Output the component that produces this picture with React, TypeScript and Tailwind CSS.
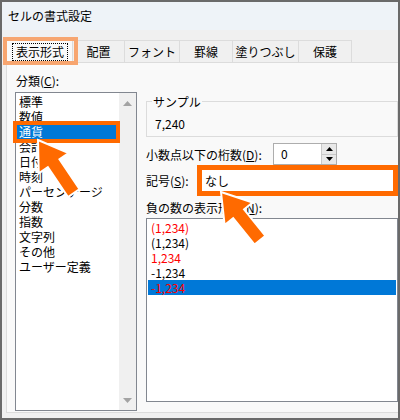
import React from "react";

const font = { fontFamily: "'Noto Sans CJK JP', 'Noto Sans', sans-serif" };

const tabs = [
  { label: "表示形式", w: "w-[68px]" },
  { label: "配置", w: "w-[52px]" },
  { label: "フォント", w: "w-[55px]" },
  { label: "罫線", w: "w-[53px]" },
  { label: "塗りつぶし", w: "w-[66px]" },
  { label: "保護", w: "w-[53px]" },
];

const categories = [
  "標準",
  "数値",
  "通貨",
  "会計",
  "日付",
  "時刻",
  "パーセンテージ",
  "分数",
  "指数",
  "文字列",
  "その他",
  "ユーザー定義",
];

const negatives = [
  { t: "(1,234)", red: true },
  { t: "(1,234)", red: false },
  { t: "1,234", red: true },
  { t: "-1,234", red: false },
  { t: "-1,234", red: true, sel: true },
];

export default function App() {
  return (
    <div
      className="relative w-[400px] h-[420px] overflow-hidden border-2 border-[#6a6a6a] bg-[#f0f0f0] flex flex-col text-[12px] text-black"
      style={font}
    >
      {/* title bar */}
      <div className="h-[28px] bg-[#eef3f8] flex items-center pl-[6px] text-[12px] leading-[16px]">
        セルの書式設定
      </div>

      {/* tabs */}
      <div className="pt-[10px] pl-[3px] flex">
        {tabs.map((t, i) => (
          <div
            key={t.label}
            className={
              "h-[22px] flex items-center justify-center border-t border-r border-[#dcdcdc] " +
              t.w +
              (i === 0 ? " bg-[#f9f9f9] border-l" : " bg-[#f0f0f0]")
            }
          >
            {i === 0 ? (
              <span className="border border-dotted border-black px-[3px] leading-[16px] ml-[2px]">
                {t.label}
              </span>
            ) : (
              <span className="leading-[16px]">{t.label}</span>
            )}
          </div>
        ))}
      </div>

      {/* content pane */}
      <div className="flex-1 ml-[4px] mb-[5px] bg-[#f9f9f9] border-l border-t border-b border-[#dcdcdc] flex pl-[8px] pt-[10px]">
        {/* left column */}
        <div className="w-[122px] flex flex-col">
          <div className="h-[15px] leading-[15px] pl-[1px] mb-[4px]">
            分類(<span className="underline">C</span>):
          </div>
          <div className="h-[319px] border border-[#828790] bg-white flex">
            <div className="flex-1 pt-[1px] pl-[1px]">
              {categories.map((c, i) => (
                <div
                  key={c}
                  className={
                    "h-[15px] leading-[15px] px-[2px] whitespace-nowrap" +
                    (i === 2 ? " bg-[#0078d7] text-white" : "")
                  }
                >
                  {c}
                </div>
              ))}
            </div>
            <div className="w-[17px] bg-[#f0f0f0] flex flex-col justify-between items-center pt-[8px] pb-[7px]">
              <svg width="9" height="5" viewBox="0 0 9 5">
                <polygon points="0,5 4.5,0 9,5" fill="#a3a3a3" />
              </svg>
              <svg width="9" height="5" viewBox="0 0 9 5">
                <polygon points="0,0 4.5,5 9,0" fill="#a3a3a3" />
              </svg>
            </div>
          </div>
        </div>

        {/* right column */}
        <div className="flex-1 ml-[9px] flex flex-col pt-[28px]">
          <div className="relative h-[36px] border border-[#dcdcdc] pl-[8px] pt-[14px]">
            <span className="absolute left-[5px] -top-[8px] bg-[#f9f9f9] px-[1px] leading-[15px]">
              サンプル
            </span>
            <div className="leading-[15px]">7,240</div>
          </div>

          <div className="mt-[6px] h-[22px] flex items-center">
            <div className="w-[127px] whitespace-nowrap leading-[15px]">
              小数点以下の桁数(<span className="underline">D</span>):
            </div>
            <div className="w-[64px] h-[22px] border border-[#adadad] bg-white flex">
              <div className="flex-1 pl-[7px] leading-[20px]">0</div>
              <div className="w-[15px] flex flex-col border-l border-[#c8c8c8]">
                <div className="flex-1 bg-[#e8e8e8] flex items-center justify-center border-b border-[#c8c8c8]">
                  <svg width="7" height="4" viewBox="0 0 7 4">
                    <polygon points="0,4 3.5,0 7,4" fill="#000" />
                  </svg>
                </div>
                <div className="flex-1 bg-[#e8e8e8] flex items-center justify-center">
                  <svg width="7" height="4" viewBox="0 0 7 4">
                    <polygon points="0,0 3.5,4 7,0" fill="#000" />
                  </svg>
                </div>
              </div>
            </div>
          </div>

          <div className="h-[31px] flex items-center">
            <div className="w-[51px] whitespace-nowrap leading-[15px]">
              記号(<span className="underline">S</span>):
            </div>
            <div className="flex-1 h-full border-[5px] border-[#ff6a00] bg-white flex items-center pl-[3px] leading-[15px]">
              なし
            </div>
          </div>

          <div className="mt-[4px] h-[15px] leading-[15px] mb-[3px] whitespace-nowrap">
            負の数の表示形式(<span className="underline">N</span>):
          </div>
          <div className="h-[184px] border border-[#828790] bg-white p-[1px]">
            {negatives.map((n, i) => (
              <div
                key={i}
                className={
                  "h-[15px] leading-[15px] px-[3px]" +
                  (n.red ? " text-[#ff0000]" : " text-black") +
                  (n.sel ? " bg-[#0078d7]" : "")
                }
              >
                {n.t}
              </div>
            ))}
          </div>
        </div>
      </div>

      {/* annotation overlays */}
      <div className="absolute left-[1px] top-[35px] w-[75px] h-[28px] border-[4px] border-[#f7a56f] pointer-events-none" />
      <div className="absolute left-[11px] top-[119px] w-[107px] h-[22px] border-[4px] border-[#ff6a00] pointer-events-none" />

      <svg
        className="absolute -left-[2px] -top-[2px] w-[400px] h-[420px] pointer-events-none"
        viewBox="0 0 400 420"
      >
        <polygon
          points="0,0 28,-18 28,-7 64,-7 64,7 28,7 28,18"
          fill="#ff6a00"
          stroke="#ffffff"
          strokeWidth="2"
          strokeLinejoin="miter"
          transform="translate(38 140) rotate(56)"
        />
        <polygon
          points="0,0 28,-18 28,-7 62,-7 62,7 28,7 28,18"
          fill="#ff6a00"
          stroke="#ffffff"
          strokeWidth="2"
          strokeLinejoin="miter"
          transform="translate(221 192) rotate(51)"
        />
      </svg>
    </div>
  );
}
